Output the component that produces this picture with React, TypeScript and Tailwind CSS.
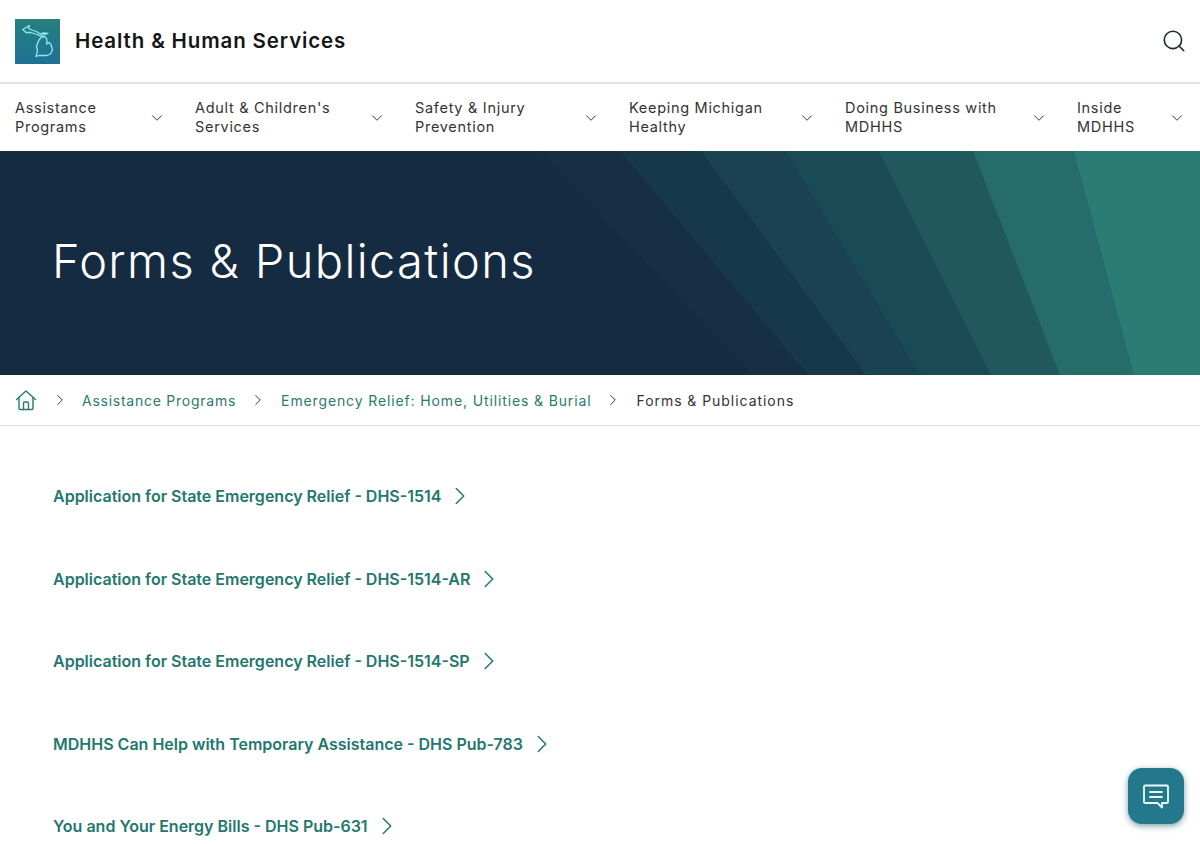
import React from 'react'
import { ChevronDown, ChevronRight, Search } from 'lucide-react'

const navItems = [
  { first: 'Assistance', second: 'Programs', width: 'w-[148px]' },
  { first: "Adult & Children's", second: 'Services', width: 'w-[188px]' },
  { first: 'Safety & Injury', second: 'Prevention', width: 'w-[182px]' },
  { first: 'Keeping Michigan', second: 'Healthy', width: 'w-[184px]' },
  { first: 'Doing Business with', second: 'MDHHS', width: 'w-[200px]' },
  { first: 'Inside', second: 'MDHHS', width: 'w-[106px]' },
]

const links = [
  'Application for State Emergency Relief - DHS-1514',
  'Application for State Emergency Relief - DHS-1514-AR',
  'Application for State Emergency Relief - DHS-1514-SP',
  'MDHHS Can Help with Temporary Assistance - DHS Pub-783',
  'You and Your Energy Bills - DHS Pub-631',
]

function MichiganLogo() {
  return (
    <div className="w-[45px] h-[45px] bg-gradient-to-b from-[#26807c] to-[#1f7195] flex items-center justify-center shrink-0">
      <svg width="45" height="45" viewBox="0 0 45 45" fill="none" stroke="#8debf4" strokeWidth="1.3" strokeLinejoin="round">
        <path d="M7.7 10.5 L14.3 6.5 L13.5 9.5 L17 11 L21.5 12.5 L25 15 L29 14 L33 14.5 L28 16 L25 17 L22 15.5 L16 13.5 L11 13.5 Z" />
        <path d="M21 37.5 L22.5 32 L21.5 27 L24 21 L27 17.5 L30.5 18 L32 21 L31.5 25 L34 23.5 L36 25.5 L37.5 31 L35.5 35 L32 36.5 L24 36.5 Z" />
      </svg>
    </div>
  )
}

function HeroShapes() {
  return (
    <svg className="absolute inset-0" width="1200" height="224" viewBox="0 0 1200 224" preserveAspectRatio="none">
      <polygon points="540,0 1200,0 1200,224 752,224" fill="#162f44" />
      <polygon points="620,0 1200,0 1200,224 808,224" fill="#17384a" />
      <polygon points="701,0 1200,0 1200,224 866,224" fill="#1a4252" />
      <polygon points="786,0 1200,0 1200,224 920,224" fill="#1a4a56" />
      <polygon points="879,0 1200,0 1200,224 991,224" fill="#20585e" />
      <polygon points="973,0 1200,0 1200,224 1060,224" fill="#266c6a" />
      <polygon points="1074,0 1200,0 1200,224 1134,224" fill="#2a7c74" />
    </svg>
  )
}

export default function App() {
  return (
    <div className="w-[1200px] h-[844px] overflow-hidden relative bg-white font-['Inter',sans-serif]">
      {/* Header */}
      <header className="h-[84px] border-b-2 border-[#e2e2e2] pl-[15px] pr-[13px] flex items-center justify-between">
        <div className="flex items-center gap-[15px]">
          <MichiganLogo />
          <span className="text-[20.5px] font-semibold tracking-[0.87px] text-[#151515]">Health &amp; Human Services</span>
        </div>
        <Search size={26} strokeWidth={1.5} className="text-[#1f2a30]" />
      </header>

      {/* Nav */}
      <nav className="h-[67px] pl-[15px] flex items-center gap-8">
        {navItems.map((item) => (
          <div key={item.first} className={`${item.width} flex items-center justify-between shrink-0`}>
            <span className="text-[14.5px] leading-[19px] tracking-[0.7px] text-[#333] -mt-[2px]">
              {item.first}
              <br />
              {item.second}
            </span>
            <ChevronDown size={18} strokeWidth={1.3} className="text-[#333] -mr-[3px] shrink-0" />
          </div>
        ))}
      </nav>

      {/* Hero */}
      <section className="relative h-[224px] bg-[#152b41] flex items-center pl-[52px] overflow-hidden">
        <HeroShapes />
        <h1 className="relative text-[47px] font-light tracking-[1.35px] text-white pb-[3px]">Forms &amp; Publications</h1>
      </section>

      {/* Breadcrumb */}
      <div className="h-[51px] border-b border-[#d9d9d9] pl-[15px] flex items-center text-[14px]">
        <svg width="22" height="22" viewBox="0 0 22 22" fill="none" stroke="#2a7a70" strokeWidth="1.4" strokeLinejoin="round" strokeLinecap="round">
          <path d="M1.5 10.5 L11 2 L20.5 10.5" />
          <path d="M4 8.5 V19.5 a1 1 0 0 0 1 1 H17 a1 1 0 0 0 1 -1 V8.5" />
          <path d="M8.5 20.5 V14 a1 1 0 0 1 1 -1 H12.5 a1 1 0 0 1 1 1 V20.5" />
        </svg>
        <ChevronRight size={18} strokeWidth={1.3} className="text-[#333] ml-[14px] mr-[13px]" />
        <span className="text-[#2a7a70] tracking-[0.75px]">Assistance Programs</span>
        <ChevronRight size={18} strokeWidth={1.3} className="text-[#333] ml-[13px] mr-[14px]" />
        <span className="text-[#2a7a70] tracking-[0.87px]">Emergency Relief: Home, Utilities &amp; Burial</span>
        <ChevronRight size={18} strokeWidth={1.3} className="text-[#333] ml-[13px] mr-[14px]" />
        <span className="text-[#333] tracking-[0.95px]">Forms &amp; Publications</span>
      </div>

      {/* Links */}
      <main className="pl-[53px] pt-[59px] flex flex-col gap-[60.5px]">
        {links.map((link) => (
          <a key={link} className="flex items-center gap-[4px] h-[22px] text-[16px] font-semibold text-[#23776d]">
            <span>{link}</span>
            <ChevronRight size={30} strokeWidth={1.2} className="shrink-0" />
          </a>
        ))}
      </main>

      {/* Chat button */}
      <button className="absolute left-[1128px] top-[768px] w-[56px] h-[56px] rounded-[14px] bg-[#24788c] shadow-[0_2px_6px_rgba(20,80,90,0.55)] flex items-center justify-center">
        <svg width="28" height="28" viewBox="0 0 28 28" fill="none" stroke="#e8fbfd" strokeWidth="1.8" strokeLinejoin="round" strokeLinecap="round">
          <path d="M3 3.5 H25 a1 1 0 0 1 1 1 V20 a1 1 0 0 1 -1 1 H20 V25.5 L15.5 21 H3 a1 1 0 0 1 -1 -1 V4.5 a1 1 0 0 1 1 -1 Z" />
          <path d="M8 10 H20" />
          <path d="M8 15 H20" />
        </svg>
      </button>
    </div>
  )
}
